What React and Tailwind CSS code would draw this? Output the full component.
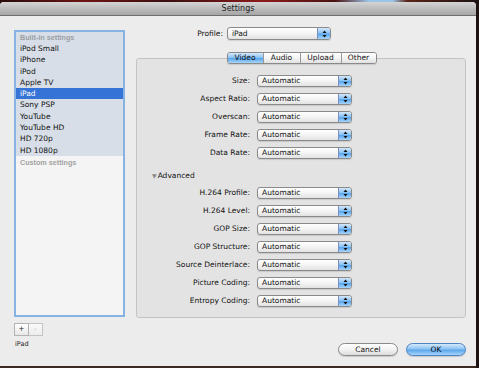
import React from 'react';

const presets = ['iPod Small', 'iPhone', 'iPod', 'Apple TV', 'iPad', 'Sony PSP', 'YouTube', 'YouTube HD', 'HD 720p', 'HD 1080p'];

const basicRows = ['Size:', 'Aspect Ratio:', 'Overscan:', 'Frame Rate:', 'Data Rate:'];
const advancedRows = ['H.264 Profile:', 'H.264 Level:', 'GOP Size:', 'GOP Structure:', 'Source Deinterlace:', 'Picture Coding:', 'Entropy Coding:'];

const tabs = [
  { label: 'Video', w: 'w-[35px]', active: true },
  { label: 'Audio', w: 'w-[37px]' },
  { label: 'Upload', w: 'w-[41px]' },
  { label: 'Other', w: 'w-[35px]' },
];

const Arrows = () => (
  <svg width="5" height="8" viewBox="0 0 5 8">
    <path d="M2.5 0.5 L4.5 3 L0.5 3 Z" fill="#111" />
    <path d="M2.5 7.5 L4.5 5 L0.5 5 Z" fill="#111" />
  </svg>
);

const Popup = ({ value, size }) => (
  <div className={`flex items-stretch overflow-hidden rounded-[3px] border border-[#8a8a8a] bg-gradient-to-b from-white via-[#f4f4f4] to-[#e2e2e2] shadow-[0_1px_1px_rgba(0,0,0,0.12)] ${size}`}>
    <span className="flex flex-1 items-center pl-[4px] text-[7.5px] leading-none text-[#111]">{value}</span>
    <span className="flex w-[13px] items-center justify-center border-l border-[#7d8fbf] bg-[linear-gradient(180deg,#d6e8fb_0%,#8cc3f3_45%,#5aa6ec_55%,#a9d5fa_100%)]">
      <Arrows />
    </span>
  </div>
);

const Row = ({ label }) => (
  <div className="flex h-[18px] items-start">
    <span className="w-[113px] pt-[1px] text-right text-[7.5px] leading-[10px] text-[#111]">{label}</span>
    <div className="ml-[7px]">
      <Popup value="Automatic" size="h-[12px] w-[95px]" />
    </div>
  </div>
);

export default function App() {
  return (
    <div className="flex h-[368px] w-[479px] flex-col bg-[linear-gradient(90deg,#2a0c0c_0%,#6e1414_18%,#3a0f0f_35%,#8c1b1b_55%,#4a1212_70%,#9cc4e4_77%,#9cc4e4_82%,#5a2418_85%,#1c1212_100%)] pb-[2px] pr-[3px] pt-[2px] font-['DejaVu_Sans',Verdana,sans-serif]">
      <div className="flex flex-1 flex-col overflow-hidden rounded-t-[4px] bg-[#ececec] shadow-[0_2px_0_#3a2a20]">
        {/* Title bar */}
        <div className="flex h-[14px] items-center justify-center border-b border-[#6f6f6f] bg-gradient-to-b from-[#d4d4d4] to-[#a6a6a6] text-[8px] leading-none text-[#222]">
          Settings
        </div>

        <div className="flex flex-1 pl-[14px]">
          {/* Left column: presets */}
          <div className="flex w-[111px] flex-col pt-[14px]">
            <div className="flex h-[287px] flex-col border-2 border-[#86b3e3] bg-[#f4f4f4]">
              <div className="bg-[#d7dee7]">
                <div className="h-[11px] pl-[4px] font-['Liberation_Sans',Arial,sans-serif] text-[7.2px] font-bold leading-[11px] text-[#9a9ea4]">Built-in settings</div>
                {presets.map((p) => (
                  <div
                    key={p}
                    className={`h-[11.3px] pl-[4px] text-[7.5px] leading-[11.3px] ${p === 'iPad' ? 'bg-[#3673d6] text-white' : 'text-[#111]'}`}
                  >
                    {p}
                  </div>
                ))}
              </div>
              <div className="h-[14px] pl-[4px] font-['Liberation_Sans',Arial,sans-serif] text-[7.2px] font-bold leading-[14px] text-[#a3a3a3]">Custom settings</div>
            </div>
            <div className="mt-[6px] flex">
              <div className="flex h-[13px] w-[15px] items-center justify-center border border-[#b3b3b3] bg-gradient-to-b from-white to-[#e8e8e8] text-[7px] leading-none text-[#222]">+</div>
              <div className="flex h-[13px] w-[14px] items-center justify-center border border-l-0 border-[#c4c4c4] bg-gradient-to-b from-[#fafafa] to-[#ececec] text-[7px] leading-none text-[#aaa]">-</div>
            </div>
            <div className="mt-[4px] pl-[1px] text-[6.5px] leading-[9px] text-[#222]">iPad</div>
          </div>

          {/* Right column */}
          <div className="ml-[11px] flex w-[331px] flex-col pt-[11px]">
            <div className="flex h-[13px] items-center">
              <span className="w-[87px] text-right text-[7.5px] leading-none text-[#111]">Profile:</span>
              <div className="ml-[4px]">
                <Popup value="iPad" size="h-[13px] w-[104px]" />
              </div>
            </div>

            <div className="relative z-10 mt-[12px] flex justify-center">
              <div className="flex h-[12px] overflow-hidden rounded-[3px] border border-[#8a8a8a] shadow-[0_1px_1px_rgba(0,0,0,0.12)]">
                {tabs.map((t, i) => (
                  <div
                    key={t.label}
                    className={`flex items-center justify-center text-[7.5px] leading-none ${t.w} ${i > 0 ? 'border-l border-[#9a9a9a]' : ''} ${
                      t.active
                        ? 'bg-[linear-gradient(180deg,#d6e8fb_0%,#8cc3f3_45%,#5aa6ec_55%,#a9d5fa_100%)] text-[#0a0a0a]'
                        : 'bg-gradient-to-b from-white via-[#f4f4f4] to-[#e2e2e2] text-[#111]'
                    }`}
                  >
                    {t.label}
                  </div>
                ))}
              </div>
            </div>

            <div className="-mt-[6px] flex h-[260px] w-[330px] flex-col rounded-[3px] border border-[#c3c3c3] bg-[#e3e3e3] pt-[16px]">
              {basicRows.map((r) => (
                <Row key={r} label={r} />
              ))}
              <div className="flex h-[22px] items-start pl-[15px] pt-[6px]">
                <span className="mr-[1px] text-[6px] leading-[10px] text-[#888]">▼</span>
                <span className="text-[7.5px] leading-[10px] text-[#111]">Advanced</span>
              </div>
              {advancedRows.map((r) => (
                <Row key={r} label={r} />
              ))}
            </div>

            <div className="mt-[25px] flex justify-end gap-[8px] pr-[1px]">
              <div className="flex h-[13px] w-[60px] items-center justify-center rounded-full border border-[#8a8a8a] bg-gradient-to-b from-white via-[#f2f2f2] to-[#dcdcdc] text-[7.5px] leading-none text-[#111] shadow-[0_1px_1px_rgba(0,0,0,0.15)]">
                Cancel
              </div>
              <div className="flex h-[13px] w-[60px] items-center justify-center rounded-full border border-[#4f84c4] bg-[linear-gradient(180deg,#d4e8fb_0%,#8cc3f3_45%,#5ba7ec_55%,#a6d4fa_100%)] text-[7.5px] leading-none text-[#0a0a0a] shadow-[0_1px_1px_rgba(0,0,0,0.15)]">
                OK
              </div>
            </div>
          </div>
        </div>
      </div>
    </div>
  );
}
